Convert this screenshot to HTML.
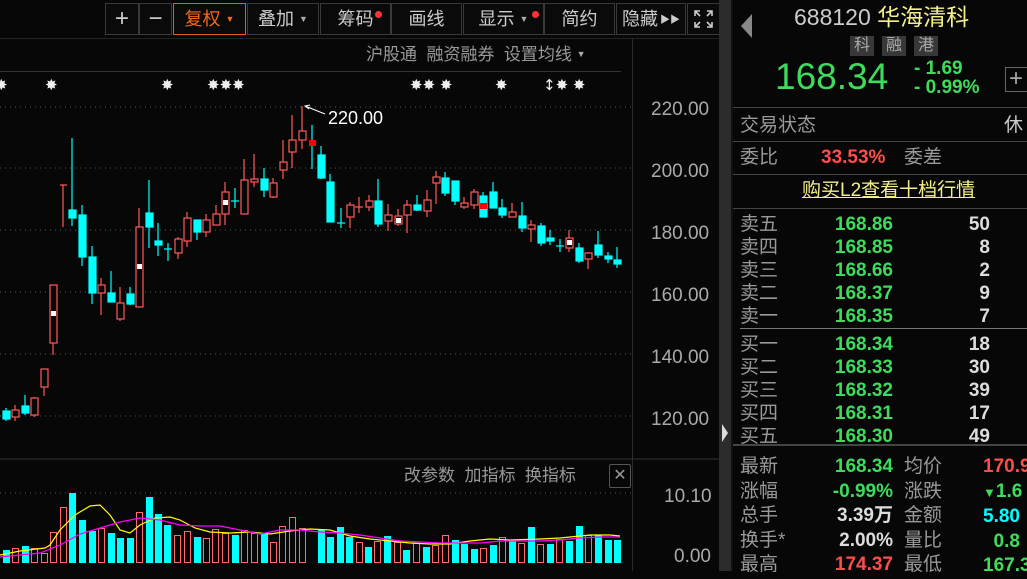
<!DOCTYPE html>
<html><head><meta charset="utf-8"><style>
*{margin:0;padding:0;box-sizing:border-box}
body{width:1027px;height:571px;overflow:hidden;background:#070707;font-family:"Liberation Sans","Noto Sans CJK SC",sans-serif;position:relative}
.a{position:absolute;white-space:nowrap;line-height:1}
.btn{position:absolute;top:3px;height:32px;border:1px solid #3a3a3a;color:#ccc;font-size:18px;text-align:center;line-height:30px;background:#0a0a0a;white-space:nowrap;overflow:hidden}
.dot{position:absolute;width:7px;height:7px;border-radius:50%;background:#f33}
.tri{font-size:9px;color:#aaa;vertical-align:3px}
.g{color:#3ddc5c}.r{color:#ff4d4d}.w{color:#ddd}.l{color:#999}
.row{position:absolute;left:740px;font-size:19px;line-height:1;white-space:nowrap}
.p{position:absolute;font-weight:bold;font-size:19px;text-align:right}
</style></head><body>
<!-- toolbar -->
<div class="btn" style="left:105px;width:34px;font-size:24px">+</div>
<div class="btn" style="left:139px;width:33px;font-size:24px">−</div>
<div class="btn" style="left:173px;width:73px;border-color:#e06010;color:#f06a1a">复权 <span class="tri" style="color:#f06a1a">▼</span></div>
<div class="btn" style="left:247px;width:72px">叠加 <span class="tri">▼</span></div>
<div class="btn" style="left:320px;width:71px">筹码<span class="dot" style="left:54px;top:7px"></span></div>
<div class="btn" style="left:391px;width:71px">画线</div>
<div class="btn" style="left:463px;width:81px">显示 <span class="tri">▼</span><span class="dot" style="left:68px;top:7px"></span></div>
<div class="btn" style="left:544px;width:71px">简约</div>
<div class="btn" style="left:616px;width:70px;text-align:left;padding-left:5px">隐藏<span style="font-size:10px;margin-left:2px;vertical-align:2px">▶▶</span></div>
<div class="btn" style="left:687px;width:33px"><svg width="31" height="30" style="position:absolute;left:0;top:0"><g fill="none" stroke="#ccc" stroke-width="1.6"><path d="M7 12V7h5M7 7l5 5M24 12V7h-5M24 7l-5 5M7 18v5h5M7 23l5-5M24 18v5h-5M24 23l-5-5"/></g></svg></div>
<div class="a" style="left:0;top:38px;width:720px;height:1px;background:#222"></div>
<div class="a l" style="left:366px;top:46px;font-size:17px;color:#999">沪股通 &nbsp;融资融券 &nbsp;设置均线 <span class="tri">▼</span></div>
<div class="a" style="left:0;top:71px;width:621px;height:1px;background:#333"></div>
<div class="a" style="left:632px;top:38px;width:1px;height:533px;background:#2a2a2a"></div>
<!-- chart svg -->
<svg class="a" style="left:0;top:0" width="720" height="571">
<g stroke="#555" stroke-dasharray="1,4">
<line x1="0" y1="107" x2="632" y2="107"/><line x1="0" y1="168" x2="632" y2="168"/><line x1="0" y1="230" x2="632" y2="230"/><line x1="0" y1="292" x2="632" y2="292"/><line x1="0" y1="354" x2="632" y2="354"/><line x1="0" y1="416" x2="632" y2="416"/><line x1="0" y1="493" x2="632" y2="493"/>
</g>
<g fill="#eee" font-size="15" font-family="DejaVu Sans">
<text x="-5" y="90">✸</text><text x="45" y="90">✸</text><text x="161" y="90">✸</text><text x="207" y="90">✸✸✸</text><text x="410" y="90">✸✸ ✸</text><text x="495" y="90">✸</text><text x="543" y="90">↕✸ ✸</text>
</g>
<g fill="#aaa" font-size="19">
<text x="651" y="115">220.00</text><text x="651" y="177">200.00</text><text x="651" y="239">180.00</text><text x="651" y="301">160.00</text><text x="651" y="363">140.00</text><text x="651" y="425">120.00</text>
<text x="664" y="502">10.10</text><text x="674" y="562">0.00</text>
</g>
<line x1="0" y1="459" x2="720" y2="459" stroke="#333"/>
<line x1="305" y1="106" x2="325" y2="114" stroke="#fff"/><polyline points="310,105 305,106 309,109" fill="none" stroke="#fff"/>
<text x="328" y="124" fill="#fff" font-size="18">220.00</text>
<g id="c" stroke-width="1.2">
<g stroke="#00ffff" fill="#00ffff">
<line x1="6" y1="408" x2="6" y2="421"/><rect x="3" y="411" width="7" height="8"/>
<line x1="25" y1="395" x2="25" y2="415"/><rect x="22" y="406" width="7" height="7"/>
<line x1="72" y1="138" x2="72" y2="226"/><rect x="69" y="210" width="7" height="8"/>
<line x1="82" y1="205" x2="82" y2="266"/><rect x="79" y="215" width="7" height="42"/>
<line x1="92" y1="246" x2="92" y2="304"/><rect x="89" y="257" width="7" height="36"/>
<line x1="111" y1="271" x2="111" y2="302"/><rect x="108" y="293" width="7" height="9"/>
<line x1="130" y1="287" x2="130" y2="305"/><rect x="127" y="294" width="7" height="10"/>
<line x1="149" y1="180" x2="149" y2="248"/><rect x="146" y="213" width="7" height="14"/>
<line x1="158" y1="223" x2="158" y2="256"/><rect x="155" y="241" width="7" height="4"/>
<line x1="168" y1="243" x2="168" y2="261"/><line x1="164" y1="249" x2="172" y2="249"/>
<line x1="197" y1="220" x2="197" y2="240"/><rect x="194" y="220" width="7" height="12"/>
<line x1="235" y1="188" x2="235" y2="208"/><line x1="231" y1="201" x2="239" y2="201"/>
<line x1="264" y1="168" x2="264" y2="197"/><rect x="261" y="179" width="7" height="11"/>
<line x1="312" y1="125" x2="312" y2="169"/>
<line x1="321" y1="146" x2="321" y2="179"/><rect x="318" y="155" width="7" height="23"/>
<line x1="330" y1="174" x2="330" y2="222"/><rect x="327" y="182" width="7" height="40"/>
<line x1="341" y1="208" x2="341" y2="228"/><line x1="337" y1="223" x2="345" y2="223"/>
<line x1="378" y1="179" x2="378" y2="227"/><rect x="375" y="201" width="7" height="23"/>
<line x1="417" y1="195" x2="417" y2="211"/><rect x="414" y="205" width="7" height="5"/>
<line x1="445" y1="172" x2="445" y2="196"/><rect x="442" y="178" width="7" height="15"/>
<line x1="455" y1="181" x2="455" y2="205"/><rect x="452" y="181" width="7" height="20"/>
<line x1="483" y1="192" x2="483" y2="217"/><rect x="480" y="196" width="7" height="21"/>
<line x1="493" y1="182" x2="493" y2="208"/><rect x="490" y="192" width="7" height="16"/>
<line x1="502" y1="199" x2="502" y2="218"/><rect x="499" y="208" width="7" height="7"/>
<line x1="522" y1="202" x2="522" y2="232"/><rect x="519" y="216" width="7" height="12"/>
<line x1="541" y1="223" x2="541" y2="246"/><rect x="538" y="226" width="7" height="17"/>
<line x1="550" y1="230" x2="550" y2="245"/><rect x="547" y="238" width="7" height="3"/>
<line x1="560" y1="239" x2="560" y2="252"/><line x1="556" y1="246" x2="564" y2="246"/>
<line x1="579" y1="243" x2="579" y2="263"/><rect x="576" y="248" width="7" height="13"/>
<line x1="598" y1="231" x2="598" y2="258"/><rect x="595" y="245" width="7" height="10"/>
<line x1="608" y1="252" x2="608" y2="263"/><rect x="605" y="256" width="7" height="3"/>
<line x1="617" y1="247" x2="617" y2="268"/><rect x="614" y="260" width="7" height="4"/>
</g>
<rect x="309" y="140" width="7" height="6" fill="#f00"/>
<rect x="480" y="203" width="7" height="6" fill="#f00"/>
<g stroke="#ff5a5a" fill="#070707">
<line x1="15" y1="405" x2="15" y2="421"/><rect x="12" y="410" width="7" height="7"/>
<line x1="34" y1="397" x2="34" y2="417"/><rect x="31" y="398" width="7" height="17"/>
<line x1="44" y1="369" x2="44" y2="396"/><rect x="41" y="369" width="7" height="18"/>
<line x1="53" y1="285" x2="53" y2="355"/><rect x="50" y="285" width="7" height="58"/>
<line x1="63" y1="185" x2="63" y2="227"/><line x1="60" y1="185" x2="67" y2="185"/>
<line x1="101" y1="278" x2="101" y2="315"/><rect x="98" y="285" width="7" height="8"/>
<line x1="120" y1="287" x2="120" y2="321"/><rect x="117" y="303" width="7" height="16"/>
<line x1="139" y1="208" x2="139" y2="307"/><rect x="136" y="227" width="7" height="80"/>
<line x1="178" y1="237" x2="178" y2="259"/><rect x="175" y="239" width="7" height="14"/>
<line x1="187" y1="212" x2="187" y2="247"/><rect x="184" y="218" width="7" height="23"/>
<line x1="206" y1="214" x2="206" y2="237"/><rect x="203" y="220" width="7" height="12"/>
<line x1="216" y1="205" x2="216" y2="225"/><rect x="213" y="214" width="7" height="11"/>
<line x1="225" y1="182" x2="225" y2="225"/><rect x="222" y="192" width="7" height="22"/>
<line x1="244" y1="159" x2="244" y2="214"/><rect x="241" y="180" width="7" height="34"/>
<line x1="254" y1="154" x2="254" y2="187"/><rect x="251" y="179" width="7" height="3"/>
<line x1="273" y1="178" x2="273" y2="198"/><rect x="270" y="183" width="7" height="14"/>
<line x1="283" y1="140" x2="283" y2="179"/><rect x="280" y="162" width="7" height="8"/>
<line x1="292" y1="115" x2="292" y2="168"/><rect x="289" y="140" width="7" height="12"/>
<line x1="302" y1="106" x2="302" y2="149"/><rect x="299" y="131" width="7" height="9"/>
<line x1="350" y1="202" x2="350" y2="228"/><rect x="347" y="205" width="7" height="12"/>
<line x1="359" y1="197" x2="359" y2="213"/><line x1="355" y1="207" x2="363" y2="207"/>
<line x1="369" y1="195" x2="369" y2="211"/><rect x="366" y="201" width="7" height="6"/>
<line x1="388" y1="204" x2="388" y2="231"/><rect x="385" y="215" width="7" height="6"/>
<line x1="398" y1="209" x2="398" y2="226"/><rect x="395" y="216" width="7" height="8"/>
<line x1="407" y1="200" x2="407" y2="233"/><rect x="404" y="205" width="7" height="10"/>
<line x1="427" y1="190" x2="427" y2="217"/><rect x="424" y="200" width="7" height="11"/>
<line x1="436" y1="171" x2="436" y2="204"/><rect x="433" y="177" width="7" height="6"/>
<line x1="464" y1="197" x2="464" y2="209"/><rect x="461" y="203" width="7" height="4"/>
<line x1="474" y1="189" x2="474" y2="209"/><rect x="471" y="192" width="7" height="13"/>
<line x1="512" y1="203" x2="512" y2="217"/><rect x="509" y="212" width="7" height="5"/>
<line x1="531" y1="220" x2="531" y2="242"/><rect x="528" y="225" width="7" height="4"/>
<line x1="569" y1="230" x2="569" y2="252"/><rect x="566" y="238" width="7" height="10"/>
<line x1="588" y1="252" x2="588" y2="269"/><rect x="585" y="253" width="7" height="6"/>
</g>
<g fill="#fff"><rect x="51" y="311" width="5" height="5"/><rect x="137" y="264" width="5" height="5"/><rect x="223" y="200" width="5" height="5"/><rect x="396" y="218" width="5" height="5"/><rect x="567" y="240" width="5" height="5"/></g>
</g>
<g fill="#00ffff">
<rect x="3" y="550" width="7" height="13"/><rect x="22" y="546" width="7" height="17"/><rect x="69" y="493" width="7" height="70"/><rect x="79" y="520" width="7" height="43"/><rect x="89" y="531" width="7" height="32"/><rect x="108" y="533" width="7" height="30"/><rect x="117" y="538" width="7" height="25"/><rect x="127" y="538" width="7" height="25"/><rect x="146" y="497" width="7" height="66"/><rect x="155" y="514" width="7" height="49"/><rect x="164" y="525" width="7" height="38"/><rect x="194" y="537" width="7" height="26"/><rect x="232" y="535" width="7" height="28"/><rect x="261" y="533" width="7" height="30"/><rect x="318" y="530" width="7" height="33"/><rect x="327" y="537" width="7" height="26"/><rect x="337" y="527" width="7" height="36"/><rect x="346" y="537" width="7" height="26"/><rect x="365" y="547" width="7" height="16"/><rect x="384" y="536" width="7" height="27"/><rect x="403" y="550" width="7" height="13"/><rect x="423" y="547" width="7" height="16"/><rect x="452" y="540" width="7" height="23"/><rect x="461" y="544" width="7" height="19"/><rect x="471" y="549" width="7" height="14"/><rect x="490" y="545" width="7" height="18"/><rect x="509" y="541" width="7" height="22"/><rect x="528" y="527" width="7" height="36"/><rect x="547" y="544" width="7" height="19"/><rect x="566" y="541" width="7" height="22"/><rect x="576" y="526" width="7" height="37"/><rect x="595" y="535" width="7" height="28"/><rect x="605" y="540" width="7" height="23"/><rect x="614" y="540" width="7" height="23"/>
</g>
<g fill="none" stroke="#ff6a6a">
<rect x="12.5" y="548.5" width="6" height="14"/><rect x="31.5" y="548.5" width="6" height="14"/><rect x="41.5" y="553.5" width="6" height="9"/><rect x="50.5" y="532.5" width="6" height="30"/><rect x="60.5" y="507.5" width="6" height="55"/><rect x="98.5" y="528.5" width="6" height="34"/><rect x="136.5" y="512.5" width="6" height="50"/><rect x="174.5" y="535.5" width="6" height="27"/><rect x="184.5" y="531.5" width="6" height="31"/><rect x="203.5" y="538.5" width="6" height="24"/><rect x="212.5" y="529.5" width="6" height="33"/><rect x="222.5" y="533.5" width="6" height="29"/><rect x="241.5" y="530.5" width="6" height="32"/><rect x="251.5" y="533.5" width="6" height="29"/><rect x="270.5" y="542.5" width="6" height="20"/><rect x="279.5" y="526.5" width="6" height="36"/><rect x="289.5" y="517.5" width="6" height="45"/><rect x="299.5" y="528.5" width="6" height="34"/><rect x="356.5" y="542.5" width="6" height="20"/><rect x="374.5" y="541.5" width="6" height="21"/><rect x="394.5" y="542.5" width="6" height="20"/><rect x="413.5" y="543.5" width="6" height="19"/><rect x="432.5" y="545.5" width="6" height="17"/><rect x="442.5" y="535.5" width="6" height="27"/><rect x="480.5" y="548.5" width="6" height="14"/><rect x="499.5" y="537.5" width="6" height="25"/><rect x="518.5" y="543.5" width="6" height="19"/><rect x="537.5" y="544.5" width="6" height="18"/><rect x="556.5" y="539.5" width="6" height="23"/><rect x="585.5" y="535.5" width="6" height="27"/>
</g>
<polyline fill="none" stroke="#ffff00" stroke-width="1.2" points="0,555 20,551 45,548 50,545 60,530 75,515 90,506 100,505 110,515 120,530 130,533 140,525 155,518 170,517 180,520 195,528 210,532 230,533 250,532 270,534 290,531 310,529 330,530 350,536 370,539 390,541 410,543 430,544 450,544 470,541 490,539 510,540 540,539 560,538 590,535 610,535 620,536"/>
<polyline fill="none" stroke="#ff00ff" stroke-width="1.2" points="0,557 20,555 40,553 60,545 80,534 100,528 120,522 140,518 160,520 180,525 200,526 220,526 240,530 260,534 280,530 300,530 320,532 340,533 360,535 380,538 400,541 420,542 440,543 460,543 480,543 500,541 520,541 540,541 560,540 580,538 600,537 620,537"/>
</svg>
<div class="a" style="left:404px;top:467px;font-size:17px;color:#999">改参数 &nbsp;加指标 &nbsp;换指标</div>
<div class="a" style="left:609px;top:464px;width:22px;height:24px;border:1px solid #555;border-radius:2px;color:#999;font-size:16px;text-align:center;line-height:22px">✕</div>
<div class="a" style="left:719px;top:0;width:12px;height:571px;background:#2c2c2c"></div>
<div class="a" style="left:722px;top:424px;width:0;height:0;border-top:9px solid transparent;border-bottom:9px solid transparent;border-left:6px solid #ddd"></div>
<div class="a" style="left:731px;top:0;width:2px;height:571px;background:#111"></div>
<div class="a" style="left:741px;top:14px;width:0;height:0;border-top:12px solid transparent;border-bottom:12px solid transparent;border-right:11px solid #888"></div>
<div class="a" style="left:794px;top:6px;font-size:23px;color:#ccc">688120 <span style="color:#f3f08a">华海清科</span></div>
<div class="a" style="left:850px;top:36px;width:24px;height:20px;background:#383838;color:#aaa;font-size:16px;text-align:center;line-height:20px">科</div>
<div class="a" style="left:882px;top:36px;width:24px;height:20px;background:#383838;color:#aaa;font-size:16px;text-align:center;line-height:20px">融</div>
<div class="a" style="left:914px;top:36px;width:24px;height:20px;background:#383838;color:#aaa;font-size:16px;text-align:center;line-height:20px">港</div>
<div class="a g" style="left:775px;top:58px;font-size:37px">168.34</div>
<div class="a g" style="left:914px;top:59px;font-size:19px;font-weight:bold">- 1.69</div>
<div class="a g" style="left:914px;top:78px;font-size:19px;font-weight:bold">- 0.99%</div>
<div class="a" style="left:1005px;top:67px;width:26px;height:25px;border:1px solid #666;color:#aaa;font-size:24px;line-height:22px;padding-left:3px">+</div>
<div class="a" style="left:733px;top:107px;width:294px;height:1px;background:#444"></div>
<div class="row l" style="top:116px">交易状态</div><div class="a" style="left:1004px;top:116px;font-size:19px;color:#ccc">休</div>
<div class="a" style="left:733px;top:141px;width:294px;height:1px;background:#444"></div>
<div class="row l" style="top:148px">委比</div><div class="a r" style="left:821px;top:148px;font-size:19px;font-weight:bold">33.53%</div><div class="a l" style="left:904px;top:148px;font-size:19px">委差</div>
<div class="a" style="left:733px;top:174px;width:294px;height:1px;background:#444"></div>
<div class="a" style="left:802px;top:181px;font-size:19px;color:#f3f08a;text-decoration:underline">购买L2查看十档行情</div>
<div class="a" style="left:733px;top:208px;width:294px;height:1px;background:#444"></div>
<div class="a" style="left:740px;top:328px;width:287px;height:1px;background:#777"></div>
<div class="a" style="left:733px;top:444px;width:294px;height:2px;background:#444"></div>
<div class="row l" style="top:213px;line-height:23px">卖五<br>卖四<br>卖三<br>卖二<br>卖一</div>
<div class="p g" style="left:800px;width:93px;top:213px;line-height:23px">168.86<br>168.85<br>168.66<br>168.37<br>168.35</div>
<div class="p w" style="left:930px;width:60px;top:213px;line-height:23px">50<br>8<br>2<br>9<br>7</div>
<div class="row l" style="top:333px;line-height:23px">买一<br>买二<br>买三<br>买四<br>买五</div>
<div class="p g" style="left:800px;width:93px;top:333px;line-height:23px">168.34<br>168.33<br>168.32<br>168.31<br>168.30</div>
<div class="p w" style="left:930px;width:60px;top:333px;line-height:23px">18<br>30<br>39<br>17<br>49</div>
<div class="row l" style="top:455px;line-height:24.5px">最新<br>涨幅<br>总手<br>换手*<br>最高</div>
<div class="p" style="left:800px;width:93px;top:455px;line-height:24.5px"><span class="g">168.34</span><br><span class="g">-0.99%</span><br><span class="w">3.39万</span><br><span class="w">2.00%</span><br><span class="r">174.37</span></div>
<div class="row l" style="left:904px;top:455px;line-height:24.5px">均价<br>涨跌<br>金额<br>量比<br>最低</div>
<div class="p" style="left:983px;top:455px;line-height:24.5px;text-align:left"><span class="r">170.9</span><br><span class="g"><span style="font-size:13px">▼</span>1.6</span><br><span style="color:#00ffff">5.80</span><br><span class="g">&nbsp;&nbsp;0.8</span><br><span class="g">167.3</span></div>
</body></html>
